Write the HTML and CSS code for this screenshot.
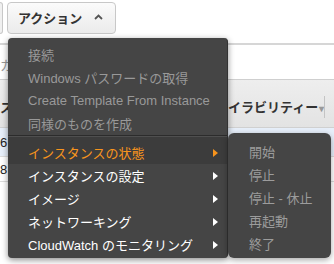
FILE: index.html
```html
<!DOCTYPE html>
<html lang="ja">
<head>
<meta charset="utf-8">
<link rel="stylesheet" href="styles.css">
</head>
<body>
<div class="page">
  <div class="toolbar">
    <div class="stub"></div>
    <div class="btn">アクション
      <svg class="caret" width="9" height="6" viewBox="0 0 9 6"><polyline points="1,5 4.5,1.5 8,5" fill="none" stroke="#555" stroke-width="1.8"/></svg>
    </div>
  </div>
  <div class="filter"><span class="ph">カ</span></div>
  <div class="thead">
    <span class="th-l">ス</span>
    <span class="th-r">イラビリティー<span class="sort">▾</span></span>
    <span class="th-sep"></span>
  </div>
  <div class="row sel"><span class="cell">6</span></div>
  <div class="row"><span class="cell">8</span></div>

  <div class="menu">
    <ul class="group">
      <li class="item dis">接続</li>
      <li class="item dis">Windows パスワードの取得</li>
      <li class="item dis">Create Template From Instance</li>
      <li class="item dis">同様のものを作成</li>
    </ul>
    <div class="sep"></div>
    <ul class="group">
      <li class="item hl">インスタンスの状態<span class="arrow"></span></li>
      <li class="item">インスタンスの設定<span class="arrow"></span></li>
      <li class="item">イメージ<span class="arrow"></span></li>
      <li class="item">ネットワーキング<span class="arrow"></span></li>
      <li class="item">CloudWatch のモニタリング<span class="arrow"></span></li>
    </ul>
    <ul class="submenu">
      <li class="sitem">開始</li>
      <li class="sitem">停止</li>
      <li class="sitem">停止 - 休止</li>
      <li class="sitem">再起動</li>
      <li class="sitem">終了</li>
    </ul>
  </div>
</div>
</body>
</html>
```
FILE: styles.css
```css
html, body {
  margin: 0;
  padding: 0;
  background: #fff;
}
body {
  font-family: "Liberation Sans", "Noto Sans CJK JP", sans-serif;
  font-size: 13px;
  color: #333;
}
.page {
  position: relative;
  width: 334px;
  height: 264px;
  overflow: hidden;
}
.toolbar {
  display: flex;
  height: 38px;
  align-items: flex-start;
}
.stub {
  margin-top: 2px;
  width: 2px;
  height: 30px;
  border: 1px solid #c8c8c8;
  border-left: none;
  border-radius: 0 4px 4px 0;
  background: #f0f0f0;
  margin-right: 4px;
}
.btn {
  margin-top: 2px;
  box-sizing: border-box;
  width: 109px;
  height: 32px;
  border: 1px solid #c8c8c8;
  border-radius: 4px;
  background: linear-gradient(#fbfbfb, #ebebeb);
  font-weight: bold;
  font-size: 13px;
  color: #333;
  display: flex;
  align-items: center;
  padding-left: 10px;
  padding-bottom: 2px;
}
.caret {
  margin-left: 12px;
  margin-top: -1px;
}
.filter {
  margin-top: 5px;
  height: 34px;
  border-top: 2px solid #d6d6d6;
  border-bottom: 1px solid #cfcfcf;
  display: flex;
  align-items: center;
}
.ph {
  color: #999;
  font-size: 13px;
  margin-top: 4px;
}
.thead {
  height: 48px;
  background: linear-gradient(#eeeeee, #e3e3e3);
  border-bottom: 1px solid #d0d0d0;
  display: flex;
  align-items: center;
  padding-top: 6px;
  box-sizing: border-box;
  font-weight: bold;
  color: #333;
}
.th-l {
  width: 228px;
}
.th-r {
  width: 96px;
  white-space: nowrap;
  overflow: hidden;
}
.sort {
  color: #999;
  font-size: 10px;
  margin-left: 1px;
}
.th-sep {
  width: 1px;
  height: 22px;
  background: #c4c4c4;
}
.row {
  height: 24px;
  display: flex;
  align-items: center;
  border-bottom: 1px solid #dcdcdc;
}
.row.sel {
  height: 28px;
  background: #e7effa;
}
.cell {
  font-size: 13px;
  color: #222;
}
.menu {
  position: absolute;
  left: 8px;
  top: 38px;
  width: 220px;
  height: 220px;
  box-sizing: border-box;
  background: #454545;
  border-right: 1px solid #333;
  border-radius: 4px 4px 4px 4px;
  box-shadow: 0 2px 6px rgba(0, 0, 0, 0.45);
  padding-top: 5px;
}
.group {
  list-style: none;
  margin: 0;
  padding: 0;
}
.item {
  height: 23px;
  display: flex;
  align-items: center;
  padding-left: 20px;
  padding-right: 9px;
  color: #fff;
  white-space: nowrap;
}
.item.dis {
  color: #999;
}
.item.hl {
  padding-top: 4px;
  background: #3c3c3c;
  color: #f7941d;
}
.arrow {
  margin-left: auto;
  width: 0;
  height: 0;
  border-left: 5px solid #fff;
  border-top: 4px solid transparent;
  border-bottom: 4px solid transparent;
}
.item.hl .arrow {
  border-left-color: #f7941d;
}
.sep {
  height: 1px;
  background: #2c2c2c;
  border-bottom: 1px solid #4f4f4f;
}
.submenu {
  position: absolute;
  left: 220px;
  top: 95px;
  width: 103px;
  height: 125px;
  box-sizing: border-box;
  margin: 0;
  list-style: none;
  background: #454545;
  border-radius: 6px;
  padding: 7px 0 0 0;
  box-shadow: 0 2px 6px rgba(0, 0, 0, 0.35);
}
.sitem {
  height: 23px;
  display: flex;
  align-items: center;
  padding-left: 21px;
  color: #9c9c9c;
  white-space: nowrap;
}
```
